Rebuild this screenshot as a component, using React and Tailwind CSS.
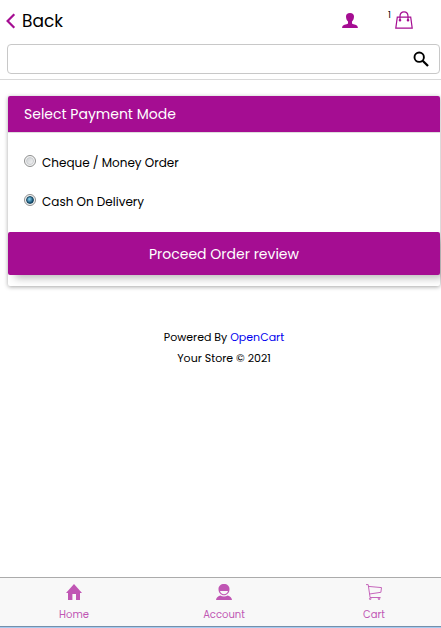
import React, { useState } from "react";

const methods = [
	{ id: "cheque", label: "Cheque / Money Order" },
	{ id: "cod", label: "Cash On Delivery" },
];

const tabs = [
	{
		label: "Home",
		icon: (
			<svg className="w-4 h-4" viewBox="0 0 16 16" fill="currentColor">
				<path d="M8 0L16 9H14V16H10V10H6.4V16H2V9H0Z" />
			</svg>
		),
	},
	{
		label: "Account",
		icon: (
			<svg className="w-4 h-4" viewBox="0 0 16 16" fill="currentColor">
				<path d="M8 0C4.7 0 2.5 2 2.5 5.2C2.5 8.8 5 11.2 8 11.2S13.5 8.8 13.5 5.2C13.5 2 11.3 0 8 0ZM4 7H12C11.6 9 10 10.2 8 10.2S4.4 9 4 7Z" />
				<path d="M0 16C0.2 13.7 1.7 12.2 4.2 11.4C6.4 12.8 9.6 12.8 11.8 11.4C14.3 12.2 15.8 13.7 16 16Z" />
			</svg>
		),
	},
	{
		label: "Cart",
		icon: (
			<svg
				className="w-4 h-4"
				viewBox="0 0 16 16"
				fill="none"
				stroke="currentColor"
				strokeWidth="0.9"
			>
				<path d="M0 0.6H2.2L4.1 13.5H14.6M2.4 2.4L15.5 3.6L14.9 8.3L3.5 10" />
				<circle cx="4.2" cy="14.8" r="0.8" />
				<circle cx="13" cy="14.8" r="0.8" />
			</svg>
		),
	},
];

const Header = () => (
	<header className="h-20 border-b border-[#d9d9d9]">
		<div className="flex items-center h-11 pl-1.5 pr-7">
			<svg
				className="w-2.5 h-4 -mt-0.5 text-[#a50d92]"
				viewBox="0 0 10 16"
				fill="none"
				stroke="currentColor"
				strokeWidth="2.2"
			>
				<path d="M8.3 1.2L1.6 8L8.3 14.8" />
			</svg>
			<span className="ml-1.5 pb-0.5 text-[17px] leading-6">Back</span>
			<svg
				className="w-4 h-4 ml-auto -mt-1 text-[#a50d92]"
				viewBox="0 0 16 16"
				fill="currentColor"
			>
				<path d="M8 1C5.3 1 4 2.2 4 4.6C4 6.8 4.8 8.6 6 9.6V11.4C4.5 12.6 0.2 12 0.1 16H15.9C15.8 12 11.5 12.6 10 11.4V9.6C11.2 8.6 12 6.8 12 4.6C12 2.2 10.7 1 8 1Z" />
			</svg>
			<span className="ml-[30px] -mt-3.5 w-[7px] text-[9px] leading-3">1</span>
			<svg
				className="w-[18px] h-[18px] -mt-1"
				viewBox="0 0 18 18"
				fill="none"
				stroke="#a50d92"
				strokeWidth="1.2"
			>
				<path d="M2.3 6.2H15.7L17.2 17.2H0.8Z" />
				<path d="M5 9V5.3C5 2.5 6.6 0.8 9 0.8S13 2.5 13 5.3V9" />
				<circle cx="5" cy="9.2" r="0.7" />
				<circle cx="13" cy="9.2" r="0.7" />
			</svg>
		</div>
		<div className="flex items-center justify-end h-[30px] ml-[7px] mr-px pr-2.5 border border-[#c8c8c8] rounded">
			<svg
				className="w-4 h-4"
				viewBox="0 0 16 16"
				fill="none"
				stroke="#000"
				strokeWidth="1.9"
			>
				<circle cx="6.2" cy="6.2" r="4.7" />
				<path d="M9.7 9.7L15 15" strokeWidth="2.3" />
			</svg>
		</div>
	</header>
);

const Radio = ({ checked }) => (
	<span className="flex items-center justify-center w-3 h-3 rounded-full border border-[#8e8f8f] bg-[#f4f4f4]">
		{checked ? (
			<span className="w-2 h-2 rounded-full border border-[#17435c] bg-radial-[at_40%_35%] from-[#8bd5f2] to-[#0d4a70] to-75%" />
		) : (
			<span className="w-2 h-2 rounded-full border border-[#c9cccf] bg-linear-to-br from-[#cfd2d5] to-[#f3f3f3]" />
		)}
	</span>
);

const App = () => {
	const [selected, setSelected] = useState("cod");

	return (
		<div className="flex flex-col w-full h-screen overflow-hidden bg-white text-black font-['Poppins','Inter',sans-serif]">
			<Header />
			{/* Payment card */}
			<section className="mt-4 ml-2 mr-px h-[190px] rounded-xs bg-white shadow-[0_1px_4px_rgba(0,0,0,0.35)]">
				<h2 className="h-[37px] pl-4 rounded-t-xs border-b border-[#dddddd] bg-[#a50d92] bg-clip-padding text-white text-sm leading-9">
					Select Payment Mode
				</h2>
				<div className="flex flex-col h-[99px] pt-2.5 pl-4">
					{methods.map((m) => (
						<button
							key={m.id}
							onClick={() => setSelected(m.id)}
							className="flex items-center gap-1.5 h-[39px] text-left text-xs"
						>
							<span className="-mt-[3px]">
								<Radio checked={selected === m.id} />
							</span>
							<span>{m.label}</span>
						</button>
					))}
				</div>
				<button className="block w-full h-[43px] rounded-xs bg-[#a50d92] text-white text-sm shadow-[5px_5px_8px_-2px_rgba(0,0,0,0.28)]">
					Proceed Order review
				</button>
			</section>
			<footer className="mt-[41px] ml-[7px] text-center text-[11px] leading-[21px]">
				<p>
					Powered By <a className="text-[#0000ee]">OpenCart</a>
				</p>
				<p>Your Store © 2021</p>
			</footer>
			{/* Bottom navigation */}
			<nav className="mt-auto h-[50px] border-t border-[#ababab] border-b border-b-[#7590ab] bg-[#f8f8f8] overflow-hidden">
				<div className="grid grid-cols-3 w-[450px] -ml-px">
					{tabs.map((t) => (
						<div
							key={t.label}
							className="flex flex-col items-center pt-1.5 text-[#c056b4]"
						>
							{t.icon}
							<span className="mt-[7px] text-[10px] leading-4">{t.label}</span>
						</div>
					))}
				</div>
			</nav>
			<div className="h-px bg-[#a6caf0]" />
		</div>
	);
};

export default App;
